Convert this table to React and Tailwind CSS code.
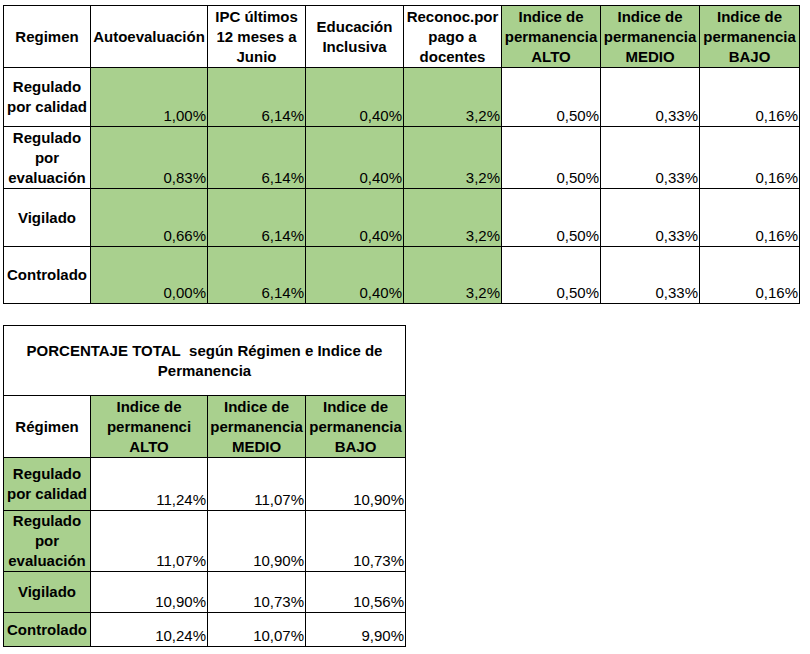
const GREEN = "bg-[#a9d08e]";

const topCols = [87, 117, 98, 98, 98, 99, 99, 100];

const topHeaders = [
  { lines: ["Regimen"], green: false },
  { lines: ["Autoevaluación"], green: false },
  { lines: ["IPC últimos", "12 meses a", "Junio"], green: false },
  { lines: ["Educación", "Inclusiva"], green: false },
  { lines: ["Reconoc.por", "pago a", "docentes"], green: false },
  { lines: ["Indice de", "permanencia", "ALTO"], green: true },
  { lines: ["Indice de", "permanencia", "MEDIO"], green: true },
  { lines: ["Indice de", "permanencia", "BAJO"], green: true },
];

const topRows = [
  { label: ["Regulado", "por calidad"], h: 59, values: ["1,00%", "6,14%", "0,40%", "3,2%", "0,50%", "0,33%", "0,16%"] },
  { label: ["Regulado", "por", "evaluación"], h: 62, values: ["0,83%", "6,14%", "0,40%", "3,2%", "0,50%", "0,33%", "0,16%"] },
  { label: ["Vigilado"], h: 58, values: ["0,66%", "6,14%", "0,40%", "3,2%", "0,50%", "0,33%", "0,16%"] },
  { label: ["Controlado"], h: 57, values: ["0,00%", "6,14%", "0,40%", "3,2%", "0,50%", "0,33%", "0,16%"] },
];

const bottomCols = [87, 117, 98, 100];

const bottomRows = [
  { label: ["Regulado", "por calidad"], h: 53, values: ["11,24%", "11,07%", "10,90%"] },
  { label: ["Regulado", "por", "evaluación"], h: 61, values: ["11,07%", "10,90%", "10,73%"] },
  { label: ["Vigilado"], h: 41, values: ["10,90%", "10,73%", "10,56%"] },
  { label: ["Controlado"], h: 34, values: ["10,24%", "10,07%", "9,90%"] },
];

function Lines({ lines }) {
  return lines.map((l, i) => (
    <div key={i} className="whitespace-nowrap">
      {l}
    </div>
  ));
}

function Value({ children, green }) {
  return (
    <td className={`border border-black align-bottom text-right pr-[1px] font-normal ${green ? GREEN : ""}`}>
      {children}
    </td>
  );
}

export default function App() {
  return (
    <div className="w-[810px] h-[654px] bg-white text-black text-[15px] leading-5 font-['Liberation_Sans',Arial,sans-serif] pt-[5px] pl-[3px]">
      <table className="border-collapse table-fixed w-[797px]">
        <colgroup>
          {topCols.map((w, i) => (
            <col key={i} style={{ width: w }} />
          ))}
        </colgroup>
        <thead>
          <tr className="h-[62px]">
            {topHeaders.map((h, i) => (
              <th key={i} className={`border border-black text-center align-middle font-bold overflow-hidden p-0 ${h.green ? GREEN : ""}`}>
                <Lines lines={h.lines} />
              </th>
            ))}
          </tr>
        </thead>
        <tbody>
          {topRows.map((r) => (
            <tr key={r.label.join(" ")} style={{ height: r.h }}>
              <td className="border border-black text-center align-middle font-bold p-0">
                <Lines lines={r.label} />
              </td>
              {r.values.map((v, i) => (
                <Value key={i} green={i < 4}>
                  {v}
                </Value>
              ))}
            </tr>
          ))}
        </tbody>
      </table>

      <table className="border-collapse table-fixed w-[403px] mt-[21px]">
        <colgroup>
          {bottomCols.map((w, i) => (
            <col key={i} style={{ width: w }} />
          ))}
        </colgroup>
        <thead>
          <tr className="h-[70px]">
            <th colSpan={4} className="border border-black text-center align-middle font-bold p-0">
              <div>PORCENTAJE TOTAL&nbsp; según Régimen e Indice de</div>
              <div>Permanencia</div>
            </th>
          </tr>
          <tr className="h-[62px]">
            <th className="border border-black text-center align-middle font-bold p-0">Régimen</th>
            {[
              ["Indice de", "permanenci", "ALTO"],
              ["Indice de", "permanencia", "MEDIO"],
              ["Indice de", "permanencia", "BAJO"],
            ].map((lines, i) => (
              <th key={i} className={`border border-black text-center align-middle font-bold overflow-hidden p-0 ${GREEN}`}>
                <Lines lines={lines} />
              </th>
            ))}
          </tr>
        </thead>
        <tbody>
          {bottomRows.map((r) => (
            <tr key={r.label.join(" ")} style={{ height: r.h }}>
              <td className={`border border-black text-center align-middle font-bold p-0 ${GREEN}`}>
                <Lines lines={r.label} />
              </td>
              {r.values.map((v, i) => (
                <Value key={i}>{v}</Value>
              ))}
            </tr>
          ))}
        </tbody>
      </table>
    </div>
  );
}
